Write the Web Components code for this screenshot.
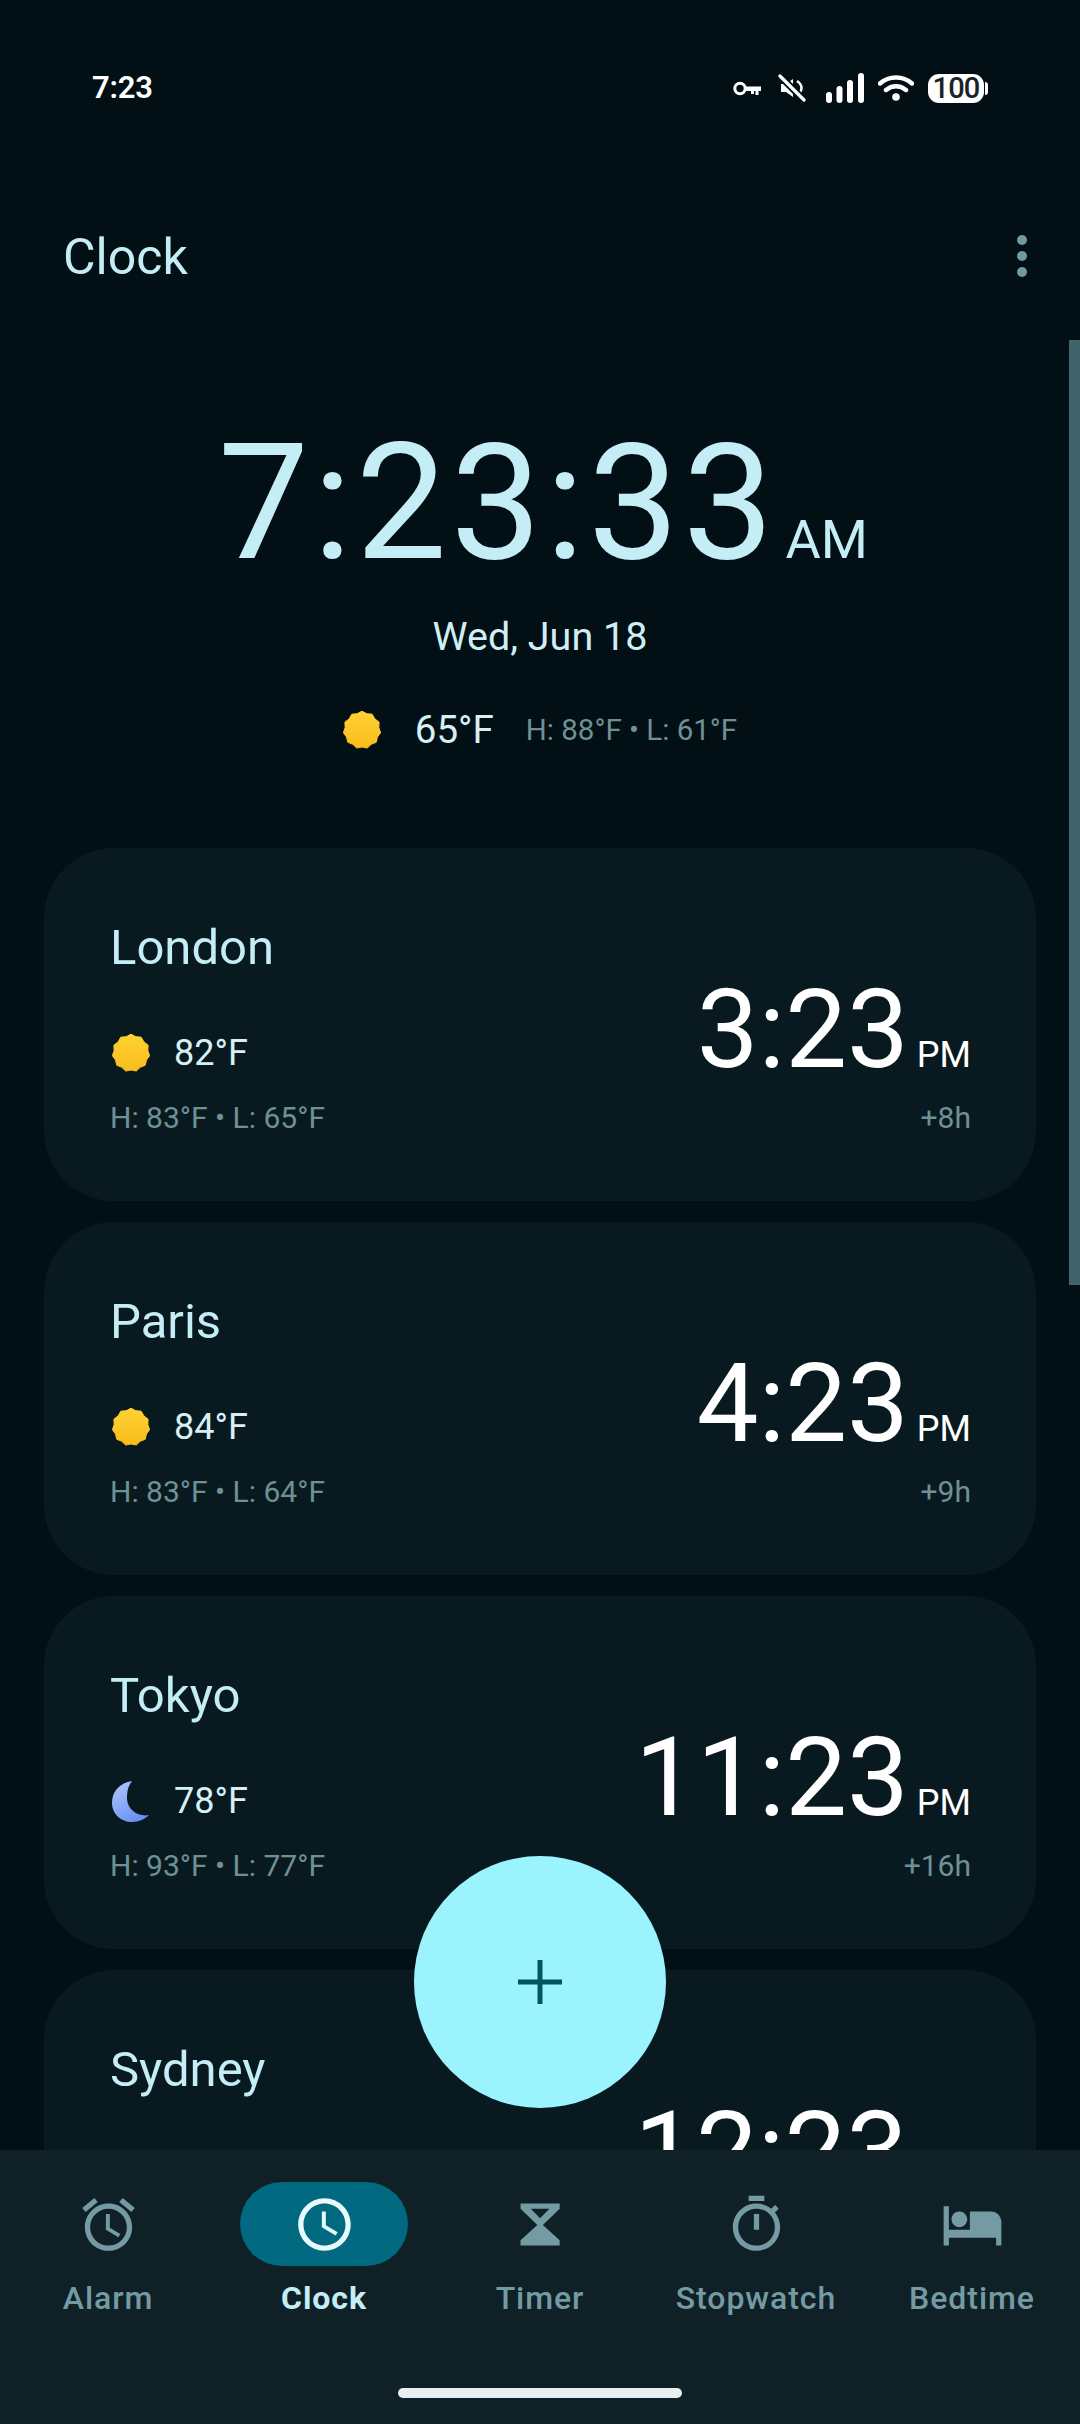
<!DOCTYPE html>
<html><head><meta charset="utf-8">
<style>
html,body{margin:0;padding:0;background:#020f14;height:2424px;overflow:hidden}
body{font-family:Roboto,"Noto Sans",sans-serif}
</style></head>
<body>
<clock-app>
  <status-bar slot="status"></status-bar>
  <top-bar slot="top" title="Clock"></top-bar>
  <main-clock slot="main"></main-clock>
  <city-card slot="main"><span slot="city">London</span><weather-icon slot="icon" kind="sun"></weather-icon><span slot="temp">82°F</span><span slot="range">H: 83°F • L: 65°F</span><span slot="time">3:23</span><span slot="ampm">PM</span><span slot="offset">+8h</span></city-card>
  <city-card slot="main"><span slot="city">Paris</span><weather-icon slot="icon" kind="sun"></weather-icon><span slot="temp">84°F</span><span slot="range">H: 83°F • L: 64°F</span><span slot="time">4:23</span><span slot="ampm">PM</span><span slot="offset">+9h</span></city-card>
  <city-card slot="main"><span slot="city">Tokyo</span><weather-icon slot="icon" kind="moon"></weather-icon><span slot="temp">78°F</span><span slot="range">H: 93°F • L: 77°F</span><span slot="time">11:23</span><span slot="ampm">PM</span><span slot="offset">+16h</span></city-card>
  <city-card slot="main"><span slot="city">Sydney</span><span slot="time">12:23</span><span slot="ampm">AM</span></city-card>
  <add-fab slot="fab"></add-fab>
  <bottom-nav slot="nav">
    <nav-item icon="alarm">Alarm</nav-item>
    <nav-item icon="clock" active>Clock</nav-item>
    <nav-item icon="timer">Timer</nav-item>
    <nav-item icon="stopwatch">Stopwatch</nav-item>
    <nav-item icon="bedtime">Bedtime</nav-item>
  </bottom-nav>
</clock-app>
<script>
function def(name, html, init){
  customElements.define(name, class extends HTMLElement{
    constructor(){super();this.attachShadow({mode:'open'}).innerHTML=html;}
    connectedCallback(){ if(init) init(this); }
  });
}
def('clock-app',`<style>
:host{display:flex;flex-direction:column;height:2424px;width:1080px;position:relative;overflow:hidden;background:#020f14;color:#c4edf6}
.scroll{flex:1;min-height:0;overflow:hidden;display:flex;flex-direction:column;gap:21px;padding:0 44px}
.track{position:absolute;right:0;top:340px;width:11px;height:945px;background:#3f626b}
</style>
<slot name="status"></slot><slot name="top"></slot>
<div class="scroll"><slot name="main"></slot></div>
<div class="track"></div>
<slot name="fab"></slot><slot name="nav"></slot>`);

def('status-bar',`<style>
:host{display:flex;align-items:center;justify-content:space-between;height:48px;padding:64px 92px 0 92px;box-sizing:content-box;color:#fff;flex:none}
.t{font:600 31px/48px Roboto,sans-serif;letter-spacing:-.2px}
.r{display:flex;align-items:center;gap:0}
svg{display:block;fill:#fff}
.bat{margin-left:14px;position:relative;width:56px;height:29px;background:#fff;border-radius:11px;color:#1a2327;font:500 29px/29px Roboto,sans-serif;text-align:center;letter-spacing:-.8px}
.cap{width:3px;height:13px;background:#fff;border-radius:0 3px 3px 0;margin-left:1px}
</style>
<span class="t">7:23</span>
<div class="r">
<svg width="28" height="15" viewBox="0 0 28 15" style="margin-right:17px"><circle cx="7" cy="7.5" r="5.2" fill="none" stroke="#fff" stroke-width="3"/><path d="M12 5.5h16v4.500h-2.500v4h-3v-4h-1.500v3h-3v-3H12z"/></svg>
<svg width="28" height="28" viewBox="0 0 28 28" style="margin-right:20px"><path d="M3 10h5l7-5v18l-7-5H3z"/><path d="M19 7c3 2 4.500 4.500 4.500 7 0 2.500-1.500 5-4.500 7" fill="none" stroke="#fff" stroke-width="2.500"/><path d="M2 2l24 24" stroke="#020f14" stroke-width="7"/><path d="M2 2l24 24" stroke="#fff" stroke-width="3.200" stroke-linecap="round"/></svg>
<svg width="38" height="30" viewBox="0 0 38 30" style="margin-right:14px"><rect x="0" y="19" width="6" height="11" rx="3"/><rect x="10.500" y="13" width="6" height="17" rx="3"/><rect x="21" y="7" width="6" height="23" rx="3"/><rect x="32" y="0" width="6" height="30" rx="3"/></svg>
<svg width="36" height="26" viewBox="0 0 36 26"><path d="M2 8.500C11 .5 25 .5 34 8.500M8 15c6-5 14-5 20 0" fill="none" stroke="#fff" stroke-width="4.400" stroke-linecap="round"/><circle cx="18" cy="22" r="3.800"/></svg>
<div class="bat">100</div><div class="cap"></div>
</div>`);

def('top-bar',`<style>
:host{display:flex;align-items:center;justify-content:space-between;height:84px;margin-top:103px;padding:0 53px 0 63px;flex:none;color:#c4edf6}
.t{font:400 50px/84px Roboto,sans-serif}
.d{display:flex;flex-direction:column;gap:6px;margin-top:-3px}
i{display:block;width:10px;height:10px;border-radius:50%;background:#6c9aa0}
</style><span class="t" id="t"></span><div class="d"><i></i><i></i><i></i></div>`,
el=>{el.shadowRoot.getElementById('t').textContent=el.getAttribute('title');el.removeAttribute('title');});

def('main-clock',`<style>
:host{display:flex;flex-direction:column;align-items:center;height:528px;box-sizing:border-box;flex:none;color:#c4edf6;padding-top:129px}
.time{display:flex;align-items:baseline;height:150px;padding-left:6px}
.big{font:400 162px/150px Roboto,sans-serif;letter-spacing:3.7px}
.ap{font:400 54px/60px Roboto,sans-serif;margin-left:8px}
.date{font:400 39.5px/46px Roboto,sans-serif;margin-top:36px;color:#cfeef5}
.w{display:flex;align-items:center;margin-top:47px;height:46px}
.temp{font:400 38.5px/46px Roboto,sans-serif;margin-left:34px;color:#d6f0f6}
.r{font:400 29.5px/46px Roboto,sans-serif;margin-left:32px;color:#6f9196}
</style>
<div class="time"><span class="big">7:23:33</span><span class="ap">AM</span></div>
<div class="date">Wed, Jun 18</div>
<div class="w"><weather-icon kind="sun"></weather-icon><span class="temp">65°F</span><span class="r">H: 88°F • L: 61°F</span></div>`);

def('city-card',`<style>
:host{flex:none;height:353px;width:992px;box-sizing:border-box;background:#081a20;border-radius:70px;padding:70px 65px 0 66px;display:grid;grid-template-columns:1fr auto;grid-template-rows:60px 102px 50px}
.city{font:400 49px/60px Roboto,sans-serif;color:#c4edf6;grid-column:1;grid-row:1}
.w{grid-column:1;grid-row:2;display:flex;align-items:center;gap:24px;font:400 36px/50px Roboto,sans-serif;color:#d6f0f6;align-self:end;padding-bottom:2px;padding-left:2px}
.range{grid-column:1;grid-row:3;font:400 30px/50px Roboto,sans-serif;color:#6f9196;padding-top:13px}
.clock{grid-column:2;grid-row:1/3;display:flex;align-items:baseline;justify-content:flex-end;color:#fff;align-self:end;margin-bottom:-6px}
.time{font:400 110px/112px Roboto,sans-serif}
.ap{font:400 36px/40px Roboto,sans-serif;margin-left:8px}
.off{grid-column:2;grid-row:3;text-align:right;font:400 30px/50px Roboto,sans-serif;color:#6f9196;padding-top:13px}
</style>
<div class="city"><slot name="city"></slot></div>
<div class="clock"><span class="time"><slot name="time"></slot></span><span class="ap"><slot name="ampm"></slot></span></div>
<div class="w"><slot name="icon"></slot><span><slot name="temp"></slot></span></div>
<div class="range"><slot name="range"></slot></div>
<div class="off"><slot name="offset"></slot></div>`);

(function(){
  let pts=[];const n=11;
  for(let i=0;i<n*2;i++){const a=Math.PI*i/n-Math.PI/2;const r=i%2?17:18.8;pts.push((20+r*Math.cos(a)).toFixed(2)+','+(20+r*Math.sin(a)).toFixed(2));}
  const sun=`<svg width="38" height="38" viewBox="1 1 38 38"><defs><linearGradient id="g" x1="0" y1="0" x2="0" y2="1"><stop offset="0" stop-color="#ffd233"/><stop offset="1" stop-color="#f9bc1c"/></linearGradient></defs><polygon points="${pts.join(' ')}" fill="url(#g)" stroke="url(#g)" stroke-linejoin="round"/></svg>`;
  const moon=`<svg width="38" height="42" viewBox="0 0 38 42"><defs><linearGradient id="m" x1="0" y1="0" x2=".6" y2="1"><stop offset="0" stop-color="#b4c8f8"/><stop offset="1" stop-color="#6a90f6"/></linearGradient></defs><path d="M20 1C8 3 0 11 0 23C0 34 9 42 20 42C27 42 33 39 37 35C27 37 16 31 15 19C15 12 16 6 20 1Z" fill="url(#m)"/></svg>`;
  def('weather-icon',`<style>:host{display:block;flex:none;width:38px}svg{display:block}</style><span id="i"></span>`,
    el=>{el.shadowRoot.getElementById('i').innerHTML=el.getAttribute('kind')==='moon'?moon:sun;});
})();

def('add-fab',`<style>
:host{position:absolute;left:414px;top:1856px;width:252px;height:252px;border-radius:50%;background:#9bf4fd;display:flex;align-items:center;justify-content:center;z-index:3}
svg{display:block}
</style><svg width="44" height="44" viewBox="0 0 44 44"><path d="M19.500 0h5v19.500H44v5H24.500V44h-5V24.500H0v-5h19.500z" fill="#00565e"/></svg>`);

def('bottom-nav',`<style>
:host{display:grid;grid-template-columns:repeat(5,216px);height:274px;flex:none;background:#0f2126;position:relative;z-index:2;padding-top:32px;box-sizing:border-box}
.home{position:absolute;left:398px;top:238px;width:284px;height:10px;border-radius:5px;background:#e8eff0}
</style><slot></slot><div class="home"></div>`);

const icons={
 alarm:'<svg viewBox="0 0 24 24"><path d="M22 5.720l-4.600-3.860-1.290 1.530 4.600 3.860L22 5.720zM7.880 3.390L6.600 1.860 2 5.710l1.290 1.530 4.590-3.850zM12.500 8H11v6l4.750 2.850.75-1.230-4-2.370V8zM12 4c-4.970 0-9 4.030-9 9s4.020 9 9 9c4.970 0 9-4.030 9-9s-4.030-9-9-9zm0 16c-3.870 0-7-3.130-7-7s3.130-7 7-7 7 3.130 7 7-3.130 7-7 7z"/></svg>',
 clock:'<svg viewBox="0 0 24 24"><path d="M11.990 2C6.470 2 2 6.480 2 12s4.470 10 9.990 10C17.520 22 22 17.520 22 12S17.520 2 11.990 2zM12 20c-4.420 0-8-3.580-8-8s3.580-8 8-8 8 3.580 8 8-3.580 8-8 8zm.5-13H11v6l5.250 3.150.75-1.230-4.500-2.670z"/></svg>',
 timer:'<svg viewBox="0 0 24 24"><path fill-rule="evenodd" d="M4.400 4H19.300V6L12.900 12.200 19.300 18V20H4.400V18L10.800 12.200 4.400 6ZM8.300 6H15.400L11.850 9.600Z"/></svg>',
 stopwatch:'<svg viewBox="0 0 24 24"><path d="M15 1H9v2h6V1zm-4 13h2V8h-2v6zm8.030-6.610l1.420-1.420c-.43-.51-.9-.99-1.410-1.410l-1.420 1.420C16.070 4.740 14.120 4 12 4c-4.970 0-9 4.030-9 9s4.020 9 9 9 9-4.030 9-9c0-2.120-.74-4.070-1.970-5.610zM12 20c-3.870 0-7-3.130-7-7s3.130-7 7-7 7 3.130 7 7-3.130 7-7 7z"/></svg>',
 bedtime:'<svg viewBox="0 0 24 24"><path d="M7 13c1.660 0 3-1.340 3-3S8.660 7 7 7s-3 1.340-3 3 1.340 3 3 3zm12-6h-8v7H3V5H1v15h2v-3h18v3h2v-9c0-2.210-1.790-4-4-4z"/></svg>'};
def('nav-item',`<style>
:host{display:flex;flex-direction:column;align-items:center;color:#749ba3}
.pill{width:168px;height:84px;border-radius:42px;display:flex;align-items:center;justify-content:center}
.ic{width:63px;height:63px}
.ic svg{display:block;width:63px;height:63px;fill:currentColor}
.l{font:500 32px/40px Roboto,sans-serif;letter-spacing:.95px;margin-top:12px;white-space:nowrap}
:host([active]){color:#c4edf6}
:host([active]) .pill{background:#016a80}
:host([active]) .l{font-weight:700}
:host([active]) .ic{color:#e8fafd}
</style><div class="pill"><div class="ic" id="i"></div></div><div class="l"><slot></slot></div>`,
 el=>{el.shadowRoot.getElementById('i').innerHTML=icons[el.getAttribute('icon')];});
</script>
</body></html>
